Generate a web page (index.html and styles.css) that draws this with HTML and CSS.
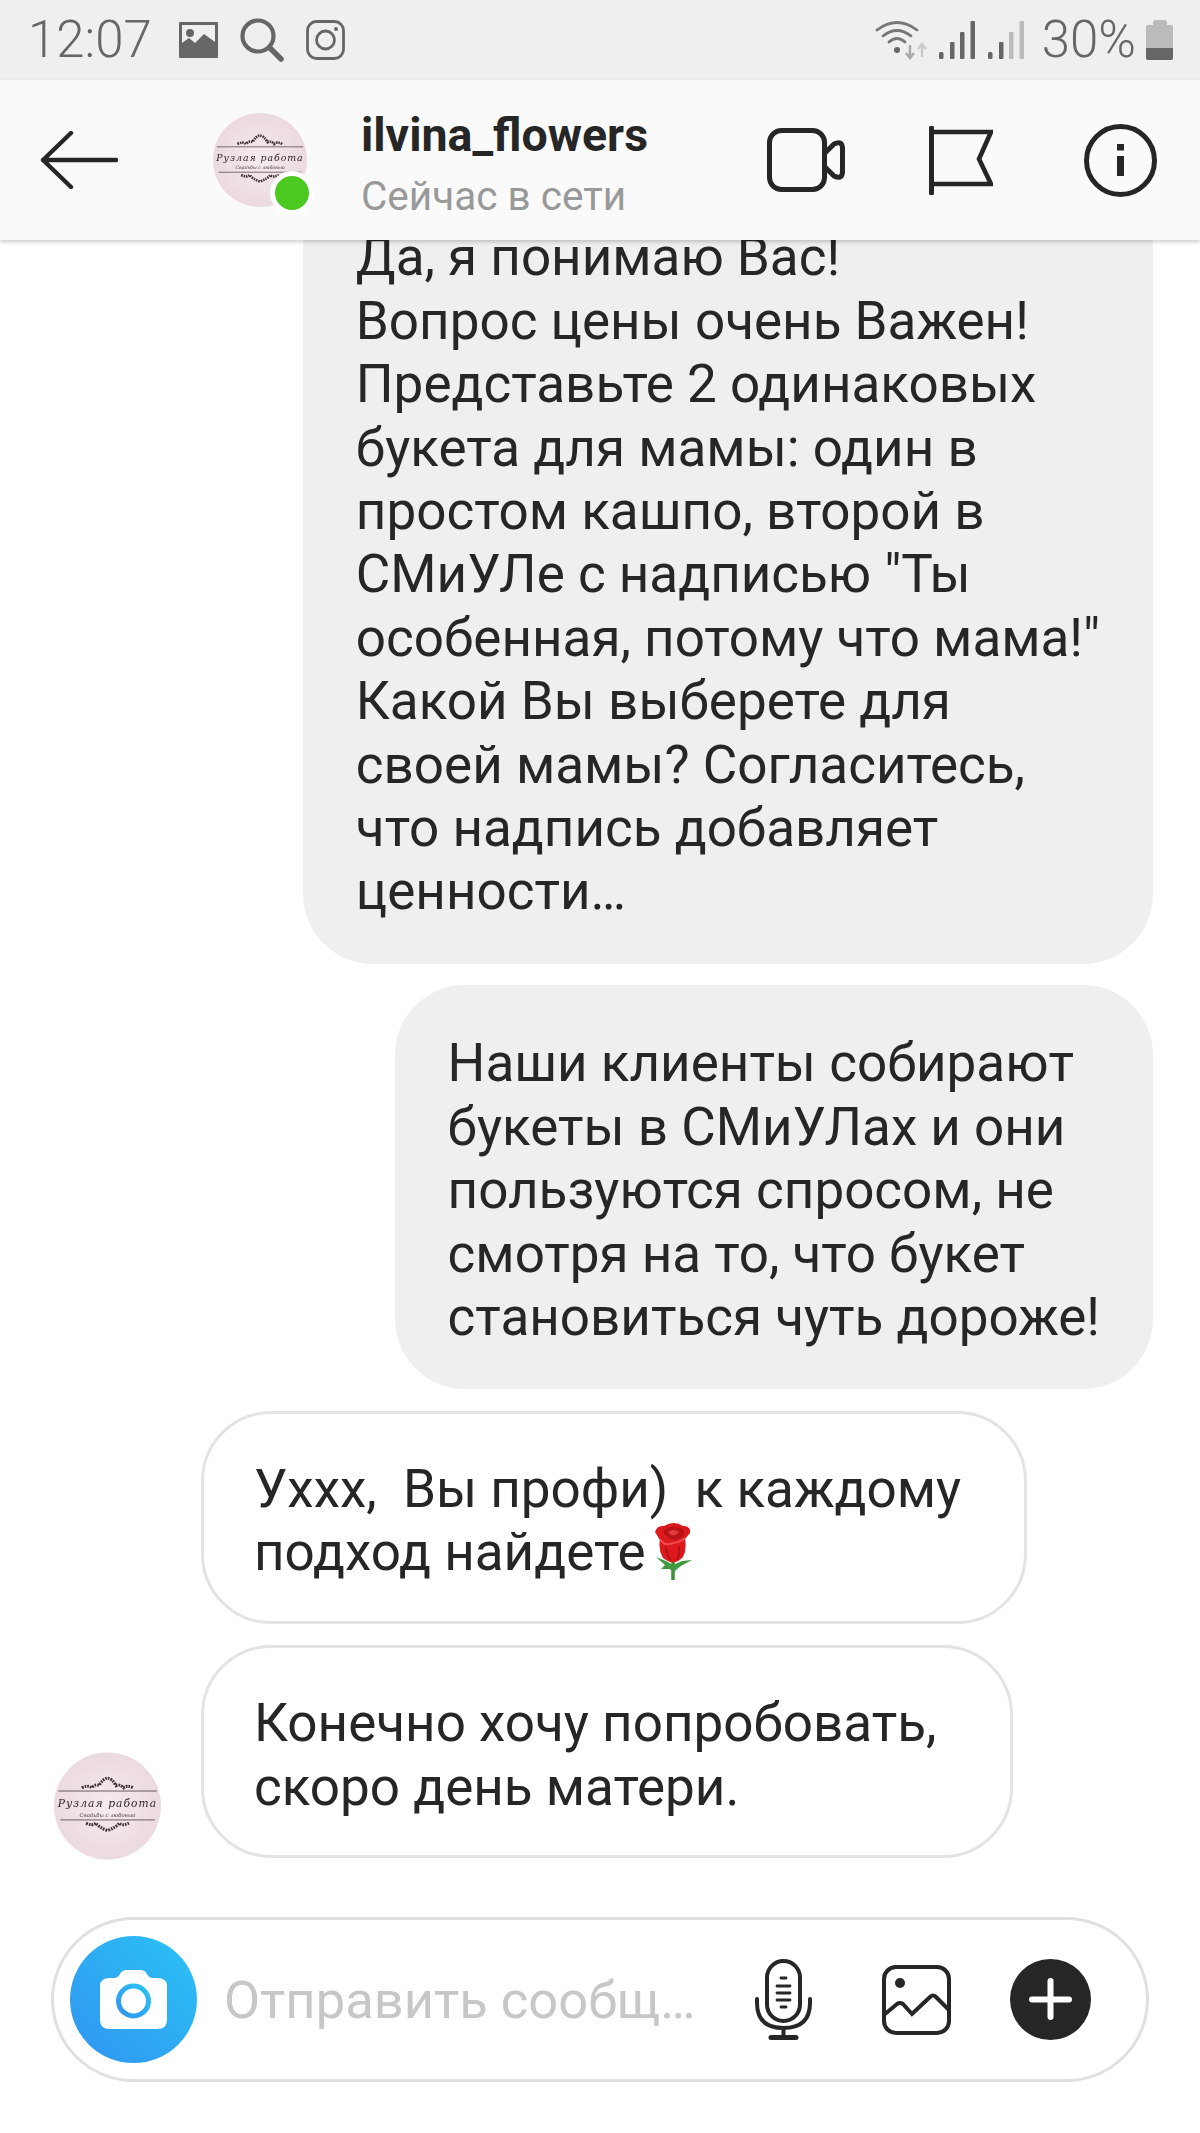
FILE: index.html
```html
<!DOCTYPE html>
<html lang="ru">

<head>
  <meta charset="UTF-8">
  <meta name="viewport" content="width=device-width, initial-scale=1.0">
  <title>ilvina_flowers</title>
  <link rel="stylesheet" href="styles.css">
</head>

<body>
  <svg class="defs" width="0" height="0">
    <defs>
      <radialGradient id="pinkFill" cx="50%" cy="50%" r="60%">
        <stop offset="0%" stop-color="#f5ebed"/>
        <stop offset="100%" stop-color="#e9d6db"/>
      </radialGradient>
      <linearGradient id="camFill" x1="0" y1="1" x2="1" y2="0">
        <stop offset="0%" stop-color="#3194f0"/>
        <stop offset="100%" stop-color="#2bc3f6"/>
      </linearGradient>
      <symbol id="logo" viewBox="0 0 100 100">
        <circle cx="50" cy="50" r="50" fill="url(#pinkFill)"/>
        <g fill="none" stroke="#3a3034">
          <path d="M4 36H96M6 63H94" stroke-width=".7"/>
          <path d="M26 33q6-3 9 0q4-4 7-2q4-7 8-7q4 0 8 7q3-2 7 2q3-3 9 0" stroke-width="2.800" stroke-dasharray="1.600 1"/>
          <path d="M30 66q6 3 9 0q3 4 11 7q8-3 11-7q3 3 9 0" stroke-width="2.800" stroke-dasharray="1.600 1"/>
        </g>
        <text x="50" y="51" class="logo-name">Рузлая работа</text>
        <text x="50" y="60" class="logo-sub">Свадьбы с любовью</text>
      </symbol>
    </defs>
  </svg>

  <div class="status-bar">
    <div class="status-left">
      <span class="status-text">12:07</span>
      <svg class="st-gallery" viewBox="0 0 39 36">
        <path fill="#666" fill-rule="evenodd" d="M1 0H38a1 1 0 0 1 1 1V35a1 1 0 0 1-1 1H1a1 1 0 0 1-1-1V1a1 1 0 0 1 1-1ZM3 3V21l7-5 6 5 9-9 11 8V3Z"/>
        <circle cx="11" cy="11" r="4" fill="#666"/>
      </svg>
      <svg class="st-search" viewBox="0 0 44 44">
        <circle cx="18" cy="18" r="15.500" fill="none" stroke="#666" stroke-width="4.200"/>
        <path d="M30 30L41 41" stroke="#666" stroke-width="5.500" stroke-linecap="round"/>
      </svg>
      <svg class="st-insta" viewBox="0 0 39 40">
        <rect x="1.500" y="1.500" width="36" height="37" rx="9" fill="none" stroke="#666" stroke-width="2.800"/>
        <circle cx="19.500" cy="20" r="9" fill="none" stroke="#666" stroke-width="2.800"/>
        <circle cx="30" cy="9" r="2" fill="#666"/>
      </svg>
    </div>
    <div class="status-right">
      <svg class="st-wifi" viewBox="0 0 52 40">
        <g fill="none" stroke="#777" stroke-width="2.800" stroke-linecap="round">
          <path d="M2 10Q22-5 42 10"/>
          <path d="M8 16Q22 5 36 16"/>
          <path d="M14 22Q22 15 30 22"/>
        </g>
        <circle cx="22" cy="30" r="3" fill="#666"/>
        <path d="M35 25V37M31 33l4 5 4-5" fill="none" stroke="#aaa" stroke-width="2.400"/>
        <path d="M47 37V25M43 29l4-5 4 5" fill="none" stroke="#ccc" stroke-width="2.400"/>
      </svg>
      <svg class="st-signal" viewBox="0 0 36 38">
        <g fill="#666">
          <rect x="0" y="31" width="4.500" height="7" rx="1.500"/>
          <rect x="11" y="21" width="4.500" height="17" rx="1"/>
          <rect x="21" y="11" width="4.500" height="27" rx="1"/>
          <rect x="31.500" y="0" width="4.500" height="38" rx="1"/>
        </g>
      </svg>
      <svg class="st-signal" viewBox="0 0 36 38">
        <g fill="#666">
          <rect x="0" y="31" width="4.500" height="7" rx="1.500"/>
          <rect x="11" y="21" width="4.500" height="17" rx="1"/>
        </g>
        <g fill="#bbb">
          <rect x="21" y="11" width="4.500" height="27" rx="1"/>
          <rect x="31.500" y="0" width="4.500" height="38" rx="1"/>
        </g>
      </svg>
      <span class="status-text">30%</span>
      <div class="battery">
        <div class="battery-cap"></div>
        <div class="battery-body"><div class="battery-level"></div></div>
      </div>
    </div>
  </div>

  <div class="top-bar">
    <svg class="back-icon" viewBox="0 0 78 58">
      <path d="M76 29H3M31 2L3 29L31 56" fill="none" stroke="#262626" stroke-width="4.400" stroke-linecap="round" stroke-linejoin="round"/>
    </svg>
    <div class="top-avatar">
      <svg class="logo-img"><use href="#logo"/></svg>
      <div class="online-dot"></div>
    </div>
    <div class="top-title">
      <div class="top-name">ilvina_flowers</div>
      <div class="top-sub">Сейчас в сети</div>
    </div>
    <div class="top-actions">
      <svg class="ic-video" viewBox="0 0 78 64">
        <rect x="2.500" y="2.500" width="55" height="59" rx="12" fill="none" stroke="#262626" stroke-width="5"/>
        <path d="M58 25L67 16Q75 12 75.500 20V44Q75 52 67 48L58 39" fill="none" stroke="#262626" stroke-width="5" stroke-linejoin="round"/>
      </svg>
      <svg class="ic-flag" viewBox="0 0 64 69">
        <path d="M2.500 2V67" stroke="#262626" stroke-width="5" stroke-linecap="round"/>
        <path d="M3 6H62L50 33L62 58H3" fill="none" stroke="#262626" stroke-width="4.600"/>
      </svg>
      <svg class="ic-info" viewBox="0 0 73 73">
        <circle cx="36.500" cy="36.500" r="34" fill="none" stroke="#262626" stroke-width="5"/>
        <rect x="33" y="20" width="7" height="6.500" fill="#262626"/>
        <rect x="33" y="32" width="7" height="20" fill="#262626"/>
      </svg>
    </div>
  </div>

  <div class="chat">
    <div class="bubble bubble-me">Да, я понимаю Вас!<br>Вопрос цены очень Важен!<br>Представьте 2 одинаковых<br>букета для мамы: один в<br>простом кашпо, второй в<br>СМиУЛе с надписью "Ты<br>особенная, потому что мама!"<br>Какой Вы выберете для<br>своей мамы? Согласитесь,<br>что надпись добавляет<br>ценности…</div>
    <div class="bubble bubble-me">Наши клиенты собирают<br>букеты в СМиУЛах и они<br>пользуются спросом, не<br>смотря на то, что букет<br>становиться чуть дороже!</div>
    <div class="row">
      <div class="row-avatar"></div>
      <div class="bubble bubble-them">Уххх,  Вы профи)  к каждому <br>подход найдете<svg class="rose" viewBox="0 0 39 57">
          <path d="M19 34V57" stroke="#3d8f3a" stroke-width="3.500"/>
          <path d="M2 34L12 38L19 42L28 38L38 37L27 43L23 46L19 50L16 46L7 46L11 42Z" fill="#3f9a42"/>
          <path d="M1 9Q3 2 10 3Q20-3 29 3Q37 3 36 10L31 16Q33 26 29 34Q20 44 9 35Q4 26 6 17Z" fill="#dc1a1d"/>
          <path d="M9 8Q18 0 29 6Q32 12 25 16Q14 19 9 8Z" fill="#b81418"/>
          <path d="M14 9Q20 5 25 9Q22 13 17 12" fill="#e63a3c"/>
          <path d="M6 16Q11 24 19 20Q26 19 31 15" fill="none" stroke="#f04a4a" stroke-width="2"/>
          <path d="M12 24Q13 33 17 37M25 24Q26 31 23 37" fill="none" stroke="#b01216" stroke-width="2"/>
        </svg></div>
    </div>
    <div class="row">
      <div class="row-avatar"><svg class="logo-img"><use href="#logo"/></svg></div>
      <div class="bubble bubble-them bubble-short">Конечно хочу попробовать,  <br>скоро день матери.</div>
    </div>
  </div>

  <div class="composer">
    <svg class="cam-btn" viewBox="0 0 127 127">
      <circle cx="63.500" cy="63.500" r="63.500" fill="url(#camFill)"/>
      <path fill="#fff" d="M40 42H44Q48 42 50 38Q52 34 57 34H70Q75 34 77 38Q79 42 83 42H87Q97 42 97 50V84Q97 93 87 93H40Q30 93 30 84V50Q30 42 40 42Z"/>
      <circle cx="63.500" cy="65" r="15" fill="none" stroke="url(#camFill)" stroke-width="5"/>
    </svg>
    <div class="placeholder">Отправить сообщ…</div>
    <svg class="ic-mic" viewBox="0 0 57 81">
      <g fill="none" stroke="#262626" stroke-linecap="round">
        <rect x="12" y="2" width="33" height="60" rx="16.500" stroke-width="4"/>
        <path d="M2 40V44Q2 69 28.500 69Q55 69 55 44V40" stroke-width="4"/>
        <path d="M28.500 69V78" stroke-width="4"/>
        <path d="M16 78.500H41" stroke-width="5"/>
        <path d="M26 19H31M22 27H35M22 34H35M22 41H35M26 48H31" stroke-width="2.800"/>
      </g>
    </svg>
    <svg class="ic-gallery" viewBox="0 0 69 70">
      <rect x="2" y="2" width="65" height="66" rx="12" fill="none" stroke="#262626" stroke-width="4"/>
      <circle cx="18" cy="18" r="5" fill="#262626"/>
      <path d="M3 49L15 39Q18 37 21 39L30 49L48 32Q51 29 54 32L67 45" fill="none" stroke="#262626" stroke-width="4"/>
    </svg>
    <svg class="ic-plus" viewBox="0 0 81 81">
      <circle cx="40.500" cy="40.500" r="40.500" fill="#262626"/>
      <path d="M40.500 22V58M22 40.500H59" stroke="#fff" stroke-width="6" stroke-linecap="round"/>
    </svg>
  </div>
</body>

</html>
```

FILE: styles.css
```css
* {
  margin: 0;
  padding: 0;
  box-sizing: border-box;
}

body {
  width: 1200px;
  height: 2133px;
  display: flex;
  flex-direction: column;
  overflow: hidden;
  background: #fff;
  color: #262626;
  font-family: Roboto, "Liberation Sans", sans-serif;
}

svg {
  display: block;
  flex-shrink: 0;
}

.defs {
  position: absolute;
}

.logo-name {
  font-family: "DejaVu Serif", serif;
  font-style: italic;
  font-size: 10px;
  letter-spacing: 1px;
  text-anchor: middle;
  fill: #2e2629;
}

.logo-sub {
  font-family: "DejaVu Serif", serif;
  font-style: italic;
  font-size: 5px;
  text-anchor: middle;
  fill: #4a3f43;
}

/* status bar */
.status-bar {
  height: 80px;
  flex-shrink: 0;
  background: #efefef;
  display: flex;
  justify-content: space-between;
  align-items: center;
  padding: 0 27px 0 28px;
}

.status-left,
.status-right {
  display: flex;
  align-items: center;
}

.status-text {
  font-size: 51px;
  font-weight: 300;
  color: #666;
  line-height: 80px;
}

.st-gallery {
  width: 39px;
  height: 36px;
  margin-left: 27px;
}

.st-search {
  width: 44px;
  height: 44px;
  margin-left: 22px;
}

.st-insta {
  width: 39px;
  height: 40px;
  margin-left: 22px;
}

.st-wifi {
  width: 52px;
  height: 40px;
}

.st-signal {
  width: 36px;
  height: 38px;
  margin-left: 12px;
}

.st-signal + .st-signal {
  margin-left: 13px;
}

.status-right .status-text {
  margin-left: 18px;
}

.battery {
  width: 27px;
  height: 40px;
  margin-left: 10px;
  display: flex;
  flex-direction: column;
  align-items: center;
}

.battery-cap {
  width: 14px;
  height: 5px;
  background: #bbb;
  border-radius: 2px 2px 0 0;
}

.battery-body {
  width: 27px;
  flex: 1;
  background: #bbb;
  border-radius: 2px;
  display: flex;
  align-items: flex-end;
}

.battery-level {
  width: 100%;
  height: 12px;
  background: #666;
  border-radius: 0 0 2px 2px;
}

/* header */
.top-bar {
  height: 160px;
  flex-shrink: 0;
  background: #fafafa;
  box-shadow: 0 2px 4px rgba(0, 0, 0, 0.2);
  display: flex;
  align-items: center;
  padding-left: 40px;
  position: relative;
  z-index: 2;
}

.back-icon {
  width: 78px;
  height: 58px;
}

.top-avatar {
  width: 94px;
  height: 94px;
  margin-left: 95px;
  flex-shrink: 0;
  position: relative;
}

.logo-img {
  width: 100%;
  height: 100%;
  filter: blur(0.6px);
}

.online-dot {
  position: absolute;
  left: 57px;
  top: 58px;
  width: 44px;
  height: 44px;
  background: #4bc921;
  border: 5px solid #fff;
  border-radius: 50%;
}

.top-title {
  margin-left: 54px;
  width: 406px;
  flex-shrink: 0;
}

.top-name {
  font-size: 46.500px;
  font-weight: 700;
  line-height: 50px;
  margin-top: 10px;
}

.top-sub {
  font-size: 40.500px;
  line-height: 50px;
  margin-top: 11px;
  color: #999;
}

.top-actions {
  display: flex;
  align-items: center;
}

.ic-video {
  width: 78px;
  height: 64px;
}

.ic-flag {
  width: 64px;
  height: 69px;
  margin-left: 84px;
}

.ic-info {
  width: 73px;
  height: 73px;
  margin-left: 91px;
}

/* messages */
.chat {
  flex: 1;
  min-height: 0;
  overflow: hidden;
  display: flex;
  flex-direction: column;
  justify-content: flex-end;
  align-items: flex-end;
  gap: 21.500px;
  padding: 0 47px 59px 54px;
}

.bubble {
  flex-shrink: 0;
  font-size: 53px;
  line-height: 63.400px;
  white-space: pre;
  padding: 47px 53px 40px;
  border-radius: 70px;
}

.bubble-me {
  background: #efefef;
}

.bubble-them {
  background: #fff;
  border: 3px solid #e3e3e3;
  padding: 44px 50px 36px 50px;
}

.bubble-short {
  padding-right: 47px;
}

.row {
  flex-shrink: 0;
  width: 100%;
  display: flex;
  align-items: flex-end;
  gap: 40px;
}

.row-avatar {
  width: 107px;
  height: 108px;
  margin-bottom: -2px;
  flex-shrink: 0;
}

.rose {
  display: inline-block;
  width: 39px;
  height: 57px;
  margin-left: 8px;
  vertical-align: -10px;
  filter: blur(0.4px);
}

/* input */
.composer {
  height: 165px;
  flex-shrink: 0;
  margin: 0 51px 51px 51px;
  border: 3px solid #e0e0e0;
  border-radius: 83px;
  display: flex;
  align-items: center;
  padding-left: 16px;
}

.cam-btn {
  width: 127px;
  height: 127px;
}

.placeholder {
  font-size: 52.500px;
  color: #c7c7c7;
  margin-left: 27px;
  width: 531px;
  white-space: nowrap;
}

.ic-mic {
  width: 57px;
  height: 81px;
}

.ic-gallery {
  width: 69px;
  height: 70px;
  margin-left: 70px;
}

.ic-plus {
  width: 81px;
  height: 81px;
  margin-left: 59px;
}
```
